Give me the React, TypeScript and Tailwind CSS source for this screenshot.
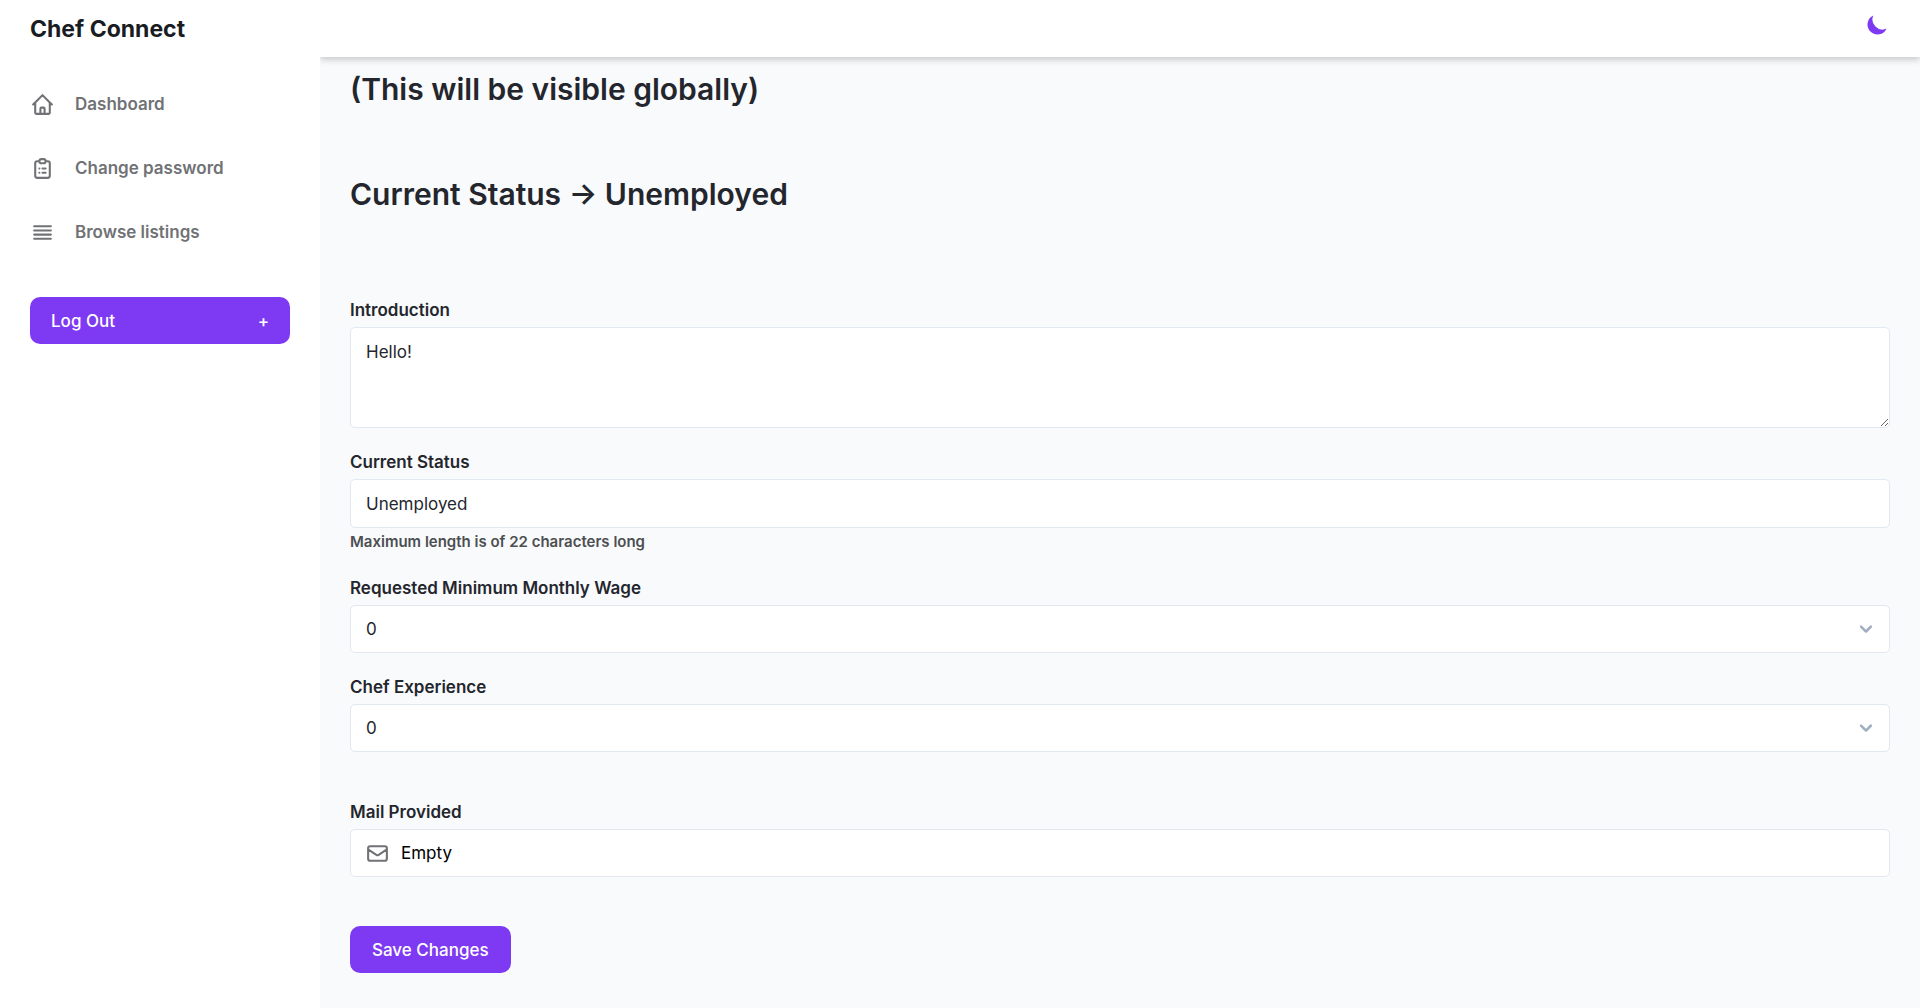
import { useState, type ReactNode } from 'react';

const fieldClass =
  'block w-full rounded-[5px] border border-[#e2e8f0] bg-white px-[15px] text-[17px] leading-[26px] text-[#24262d] focus:border-[#7e3af2] focus:outline-none';

function OutlineIcon({ d }: { d: string }) {
  return (
    <svg
      className="size-[25px] shrink-0"
      viewBox="0 0 24 24"
      fill="none"
      stroke="currentColor"
      strokeWidth="2"
      strokeLinecap="round"
      strokeLinejoin="round"
      aria-hidden="true"
    >
      <path d={d} />
    </svg>
  );
}

const links = [
  {
    label: 'Dashboard',
    d: 'M3 12l2-2m0 0l7-7 7 7M5 10v10a1 1 0 001 1h3m10-11l2 2m-2-2v10a1 1 0 01-1 1h-3m-6 0a1 1 0 001-1v-4a1 1 0 011-1h2a1 1 0 011 1v4a1 1 0 001 1m-6 0h6',
  },
  {
    label: 'Change password',
    d: 'M9 5H7a2 2 0 00-2 2v12a2 2 0 002 2h10a2 2 0 002-2V7a2 2 0 00-2-2h-2M9 5a2 2 0 002 2h2a2 2 0 002-2M9 5a2 2 0 012-2h2a2 2 0 012 2m-3 7h3m-3 4h3m-6-4h.01M9 16h.01',
  },
  { label: 'Browse listings', d: 'M4 6h16M4 10h16M4 14h16M4 18h16' },
];

function Sidebar() {
  return (
    <aside className="z-20 w-80 shrink-0 overflow-y-auto bg-white px-[30px] pt-3">
      <a href="#" className="block text-[23px] leading-[34px] font-bold text-[#1a1c23]">
        Chef Connect
      </a>
      <nav className="mt-[26px]">
        <ul>
          {links.map((link) => (
            <li key={link.label}>
              <a
                href="#"
                className="flex h-16 items-center gap-5 text-[17px] leading-[26px] font-semibold text-[#707275] hover:text-[#24262d]"
              >
                <OutlineIcon d={link.d} />
                <span>{link.label}</span>
              </a>
            </li>
          ))}
        </ul>
      </nav>
      <button
        type="button"
        className="mt-[33px] flex h-[47px] w-full items-center justify-between rounded-[10px] bg-[#7e3af2] px-[21px] text-[17px] leading-[26px] font-medium text-white hover:bg-[#6c2bd9]"
      >
        Log Out
        <span aria-hidden="true">+</span>
      </button>
    </aside>
  );
}

function Field({ id, label, children }: { id: string; label: string; children: ReactNode }) {
  return (
    <div>
      <label htmlFor={id} className="mb-[3px] block text-[17px] leading-7 font-semibold text-[#24262d]">
        {label}
      </label>
      {children}
    </div>
  );
}

function NumberSelect({ id }: { id: string }) {
  return (
    <div className="relative">
      <select id={id} defaultValue="0" className={`${fieldClass} h-12 appearance-none`}>
        {[0, 1, 2, 3, 4, 5].map((n) => (
          <option key={n} value={n}>
            {n}
          </option>
        ))}
      </select>
      <svg
        className="pointer-events-none absolute inset-y-0 right-[9px] my-auto size-[30px] text-[#a0aec0]"
        viewBox="0 0 24 24"
        fill="currentColor"
        aria-hidden="true"
      >
        <path d="M15.3 9.3a1 1 0 0 1 1.4 1.4l-4 4a1 1 0 0 1-1.4 0l-4-4a1 1 0 0 1 1.4-1.4l3.3 3.29 3.3-3.3z" />
      </svg>
    </div>
  );
}

export default function App() {
  const [status, setStatus] = useState('Unemployed');
  return (
    <div className="flex h-screen bg-[#f9fafc] font-['Inter',sans-serif]">
      <Sidebar />
      <div className="flex min-w-0 flex-1 flex-col">
        <header className="z-10 flex h-[57px] shrink-0 items-start justify-end bg-white px-[30px] pt-3 shadow-[0_4px_6px_0_rgba(0,0,0,0.12),0_2px_4px_0_rgba(0,0,0,0.06)]">
          <button type="button" aria-label="Toggle color mode" className="text-[#7e3af2]">
            <svg className="size-[25px]" viewBox="0 0 20 20" fill="currentColor" aria-hidden="true">
              <path d="M17.293 13.293A8 8 0 016.707 2.707a8.001 8.001 0 1010.586 10.586z" />
            </svg>
          </button>
        </header>
        <main className="flex-1 overflow-y-auto px-[30px] pt-[14px]">
          <h1 className="text-[30px] leading-[37px] font-semibold text-[#24262d]">
            (This will be visible globally)
          </h1>
          <h1 className="mt-[68px] text-[30px] leading-[37px] font-semibold text-[#24262d]">
            Current Status → {status}
          </h1>
          <form className="mt-[83px]" onSubmit={(e) => e.preventDefault()}>
            <div className="flex flex-col gap-5">
              <Field id="introduction" label="Introduction">
                <textarea id="introduction" defaultValue="Hello!" className={`${fieldClass} h-[101px] py-[11px]`} />
              </Field>
              <Field id="status" label="Current Status">
                <input
                  id="status"
                  type="text"
                  maxLength={22}
                  value={status}
                  onChange={(e) => setStatus(e.target.value)}
                  className={`${fieldClass} h-[49px]`}
                />
                <p className="mt-1 mb-[2px] text-[15px] leading-5 font-semibold text-[#4c4f52]">
                  Maximum length is of 22 characters long
                </p>
              </Field>
              <Field id="wage" label="Requested Minimum Monthly Wage">
                <NumberSelect id="wage" />
              </Field>
              <Field id="experience" label="Chef Experience">
                <NumberSelect id="experience" />
              </Field>
            </div>
            <div className="mt-[46px]">
              <Field id="mail" label="Mail Provided">
                <div className="relative text-[#707275]">
                  <input
                    id="mail"
                    type="email"
                    defaultValue="Empty"
                    className="block h-12 w-full rounded-[5px] border border-[#e2e8f0] bg-white pr-[15px] pl-[50px] text-[17px] leading-[26px] text-black focus:border-[#7e3af2] focus:outline-none"
                  />
                  <div className="pointer-events-none absolute inset-y-0 left-[15px] flex items-center">
                    <OutlineIcon d="M3 8l7.89 5.26a2 2 0 002.22 0L21 8M5 19h14a2 2 0 002-2V7a2 2 0 00-2-2H5a2 2 0 00-2 2v10a2 2 0 002 2z" />
                  </div>
                </div>
              </Field>
            </div>
            <button
              type="submit"
              className="mt-[49px] mb-[30px] h-[47px] rounded-[10px] bg-[#7e3af2] px-[22px] text-[17px] leading-[26px] font-medium text-white hover:bg-[#6c2bd9]"
            >
              Save Changes
            </button>
          </form>
        </main>
      </div>
    </div>
  );
}
